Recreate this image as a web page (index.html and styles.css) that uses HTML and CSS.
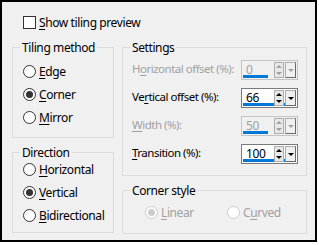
FILE: index.html
```html
<!doctype html>
<html>
<head>
	<title>Tiling</title>
	<meta charset="utf-8">
	<link rel="stylesheet" href="styles.css">
</head>
<body>
	<div class="dialog">
		<div class="check-row">
			<span class="check-box"></span>
			<span class="text"><u>S</u>how tiling preview</span>
		</div>

		<div class="columns">
			<div class="col col-left">
				<div class="group group-method">
					<span class="group-title">Tiling method</span>
					<div class="radio"><span class="dot"></span><span><u>E</u>dge</span></div>
					<div class="radio checked"><span class="dot"></span><span><u>C</u>orner</span></div>
					<div class="radio"><span class="dot"></span><span><u>M</u>irror</span></div>
				</div>
				<div class="group group-direction">
					<span class="group-title">Direction</span>
					<div class="radio"><span class="dot"></span><span><u>H</u>orizontal</span></div>
					<div class="radio checked"><span class="dot"></span><span><u>V</u>ertical</span></div>
					<div class="radio"><span class="dot"></span><span><u>B</u>idirectional</span></div>
				</div>
			</div>

			<div class="col col-right">
				<div class="group group-settings">
					<span class="group-title">Settings</span>
					<div class="field disabled">
						<span class="label">H<u>o</u>rizontal offset (%):</span>
						<div class="spin">
							<span class="value orange">0</span>
							<span class="bar" style="width: 25px"></span>
							<span class="arrows"><i class="up"></i><i class="down"></i></span>
							<span class="drop"><i class="down"></i></span>
						</div>
					</div>
					<div class="field">
						<span class="label">Ve<u>r</u>tical offset (%):</span>
						<div class="spin">
							<span class="value">66</span>
							<span class="bar" style="width: 45px"></span>
							<span class="arrows"><i class="up"></i><i class="down"></i></span>
							<span class="drop"><i class="down"></i></span>
						</div>
					</div>
					<div class="field disabled">
						<span class="label"><u>W</u>idth (%):</span>
						<div class="spin">
							<span class="value">50</span>
							<span class="bar" style="width: 25px"></span>
							<span class="arrows"><i class="up"></i><i class="down"></i></span>
							<span class="drop"><i class="down"></i></span>
						</div>
					</div>
					<div class="field">
						<span class="label"><u>T</u>ransition (%):</span>
						<div class="spin">
							<span class="value">100</span>
							<span class="bar" style="width: 45px"></span>
							<span class="arrows"><i class="up"></i><i class="down"></i></span>
							<span class="drop"><i class="down"></i></span>
						</div>
					</div>
				</div>
				<div class="group group-corner">
					<span class="group-title">Corner style</span>
					<div class="radio-line">
						<div class="radio checked disabled linear"><span class="dot"></span><span><u>L</u>inear</span></div>
						<div class="radio disabled"><span class="dot"></span><span>C<u>u</u>rved</span></div>
					</div>
				</div>
			</div>
		</div>
	</div>
</body>
</html>
```

FILE: styles.css
```css
html, body { margin: 0px; padding: 0px; background: #fff }
.dialog {
	box-sizing: border-box;
	width: 317px;
	height: 242px;
	border: 2px solid #000;
	background: #f0f0f0;
	font-family: "Noto Sans", sans-serif;
	font-size: 12px;
	letter-spacing: -0.4px;
	line-height: 15px;
	color: #000;
	white-space: nowrap;
}
u { text-underline-offset: 2px }

.check-row {
	display: flex;
	align-items: center;
	gap: 3px;
	margin: 14px 0 0 21px;
	height: 13px;
}
.check-box {
	box-sizing: border-box;
	width: 13px;
	height: 13px;
	border: 1px solid #333;
	background: #fff;
}

.columns {
	display: flex;
	gap: 8px;
	margin: 18px 0 0 10px;
}
.col { display: flex; flex-direction: column; gap: 14px }
.col-left { width: 102px }
.col-right { width: 185px }

.group {
	position: relative;
	box-sizing: border-box;
	border: 1px solid #dcdcdc;
}
.group-title {
	position: absolute;
	top: -8px;
	left: 7px;
	padding: 0 2px;
	background: #f0f0f0;
}
.group-method { height: 91px; padding: 12px 0 0 10px }
.group-direction { height: 81px; padding: 5px 0 0 10px }
.group-settings { height: 129px; padding: 8px 8px 0 9px }
.group-corner { height: 44px; padding: 10px 0 0 22px }

.radio {
	display: flex;
	align-items: center;
	gap: 3px;
	height: 23px;
}
.dot {
	box-sizing: border-box;
	width: 13px;
	height: 13px;
	border: 1px solid #333;
	border-radius: 50%;
	background: #fff;
	display: flex;
	align-items: center;
	justify-content: center;
}
.radio.checked .dot::after {
	content: "";
	width: 7px;
	height: 7px;
	border-radius: 50%;
	background: #333;
}
.radio.disabled { color: #a0a0a0 }
.radio.disabled .dot { border-color: #cccccc }
.radio.disabled.checked .dot::after { background: #cccccc }
.radio-line { display: flex }
.radio.linear { width: 82px }

.field {
	display: flex;
	justify-content: space-between;
	align-items: center;
	height: 28px;
}
.label { font-size: 11.5px; letter-spacing: -0.5px; padding-bottom: 3px }
.field.disabled .label { color: #a0a0a0 }
.spin {
	position: relative;
	box-sizing: border-box;
	width: 57px;
	height: 20px;
	border: 1px solid #7a7a7a;
	background: #fff;
}
.field.disabled .spin { border-color: #c4c4c4; background: #f0f0f0 }
.value {
	position: absolute;
	left: 4px;
	top: 1px;
}
.field.disabled .value { color: #a0a0a0 }
.value.orange { color: #e0b070 }
.bar {
	position: absolute;
	left: 1px;
	bottom: 1px;
	height: 3px;
	background: #0078d7;
}
.arrows {
	position: absolute;
	left: 32px;
	top: 1px;
	width: 10px;
	height: 16px;
	display: flex;
	flex-direction: column;
	justify-content: space-around;
	align-items: center;
	border: 1px solid #adadad;
	box-sizing: border-box;
	background: #e8e8e8;
}
.drop {
	position: absolute;
	right: 1px;
	top: 1px;
	width: 11px;
	height: 16px;
	box-sizing: border-box;
	border: 1px solid #adadad;
	border-right-color: #696969;
	border-bottom-color: #696969;
	display: flex;
	align-items: center;
	justify-content: center;
	background: #f0f0f0;
}
.up, .down { display: block; width: 0; height: 0; border-left: 3px solid transparent; border-right: 3px solid transparent }
.up { border-bottom: 3px solid #000 }
.down { border-top: 3px solid #000 }
.field.disabled .up { border-bottom-color: #a0a0a0 }
.field.disabled .down { border-top-color: #a0a0a0 }
```
